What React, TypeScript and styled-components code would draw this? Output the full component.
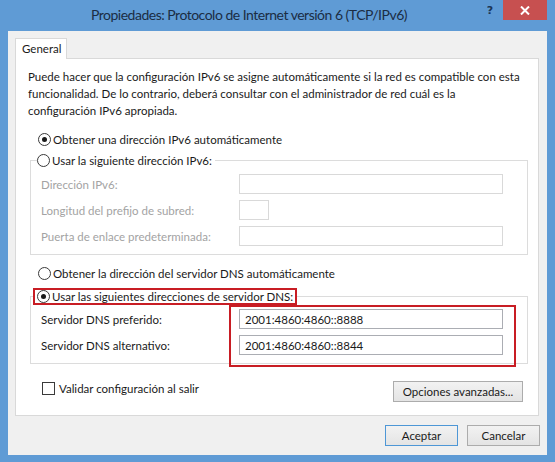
import styled, { createGlobalStyle } from "styled-components";

const GlobalStyle = createGlobalStyle`
  html, body {
    margin: 0;
    padding: 0;
  }
  body {
    background: #5f9bd5;
    font-family: "Lato", "Noto Sans", sans-serif;
    font-size: 11.5px;
    color: #1a1a1a;
  }
`;

const Window = styled.div`
  width: 555px;
  height: 462px;
  box-sizing: border-box;
  padding: 0 8px 7px 8px;
  display: flex;
  flex-direction: column;
  background: #5f9bd5;
`;

const TitleBar = styled.div`
  height: 31px;
  display: flex;
  flex-shrink: 0;
`;

const Title = styled.div`
  flex: 1;
  padding-left: 83px;
  line-height: 30px;
  font-size: 14px;
  letter-spacing: -0.5px;
  color: #1b2d44;
  white-space: nowrap;
  overflow: hidden;
`;

const HelpButton = styled.div`
  width: 26px;
  height: 20px;
  display: flex;
  align-items: center;
  justify-content: center;
  font-family: "DejaVu Sans", "Liberation Sans", sans-serif;
  font-weight: bold;
  font-size: 11px;
  color: #1b3556;
`;

const CloseButton = styled.div`
  width: 44px;
  height: 20px;
  background: #c75050;
  display: flex;
  align-items: center;
  justify-content: center;
`;

const Client = styled.div`
  flex: 1;
  background: #f0f0f0;
  padding: 7px 7px 0 7px;
  display: flex;
  flex-direction: column;
`;

const TabStrip = styled.div`
  display: flex;
  height: 20px;
`;

const Tab = styled.div`
  position: relative;
  z-index: 1;
  width: 52px;
  height: 21px;
  box-sizing: border-box;
  border: 1px solid #d9d9d9;
  border-bottom: none;
  background: #fff;
  padding-left: 6px;
  line-height: 19px;
`;

const Panel = styled.div`
  height: 358px;
  box-sizing: border-box;
  border: 1px solid #d9d9d9;
  background: #fff;
  margin-right: 1px;
  padding: 9px 12px 0 12px;
  display: flex;
  flex-direction: column;
`;

const Intro = styled.p`
  margin: 0;
  line-height: 17px;
  white-space: nowrap;
`;

const RadioRow = styled.label<{ $top: number }>`
  display: flex;
  align-items: center;
  gap: 2px;
  height: 17px;
  margin: ${({ $top }) => $top}px 0 0 10px;
  white-space: nowrap;
`;

const Radio = styled.span<{ $checked?: boolean }>`
  width: 13px;
  height: 13px;
  box-sizing: border-box;
  border-radius: 50%;
  border: 1px solid #3a3a3a;
  background: #fff;
  display: inline-flex;
  align-items: center;
  justify-content: center;
  flex-shrink: 0;

  &::after {
    content: "";
    width: 5px;
    height: 5px;
    border-radius: 50%;
    background: ${({ $checked }) => ($checked ? "#1a1a1a" : "transparent")};
  }
`;

const Group = styled.fieldset<{ $top: number }>`
  margin: ${({ $top }) => $top}px -2px 0 2px;
  padding: 0;
  min-width: 0;
  border: 1px solid #dcdcdc;
`;

const Legend = styled.legend<{ $indent: number }>`
  padding: 0;
  margin-left: ${({ $indent }) => $indent}px;
`;

const LegendRow = styled.span`
  display: flex;
  align-items: center;
  gap: 2px;
  height: 17px;
  padding-right: 3px;
  white-space: nowrap;
`;

const Highlight = styled.span`
  display: flex;
  align-items: center;
  gap: 2px;
  height: 17px;
  box-sizing: border-box;
  border: 2px solid #c81d24;
  padding: 0 2px;
  white-space: nowrap;
`;

const FieldGrid = styled.div`
  display: grid;
  grid-template-columns: 198px 264px;
  grid-auto-rows: 20px;
  row-gap: 6px;
  align-items: center;
  padding: 5px 0 8px 10px;
`;

const FieldLabel = styled.span<{ $disabled?: boolean }>`
  color: ${({ $disabled }) => ($disabled ? "#a3a3a3" : "#1a1a1a")};
  white-space: nowrap;
`;

const TextBox = styled.input<{ $width?: number }>`
  width: ${({ $width }) => $width ?? 264}px;
  height: 20px;
  box-sizing: border-box;
  margin: 0;
  padding: 0 0 0 5px;
  border: 1px solid #abadb3;
  background: #fff;
  font: inherit;
  color: #1a1a1a;
  outline: none;

  &:disabled {
    border-color: #d9d9d9;
    background: #fff;
  }
`;

const DnsBody = styled.div`
  display: flex;
  padding-left: 10px;
`;

const DnsLabels = styled.div`
  width: 188px;
  display: grid;
  grid-auto-rows: 20px;
  row-gap: 6px;
  align-items: center;
  align-content: start;
  padding-top: 4px;
`;

const DnsBox = styled.div`
  display: flex;
  flex-direction: column;
  gap: 6px;
  border: 2px solid #c81d24;
  padding: 2px 11px 10px 8px;
  margin-bottom: -4px;
`;

const BottomRow = styled.div`
  display: flex;
  justify-content: space-between;
  align-items: flex-start;
  margin-top: 17px;
`;

const CheckRow = styled.label`
  display: flex;
  align-items: center;
  gap: 4px;
  margin: 1px 0 0 14px;
  height: 13px;
`;

const CheckBox = styled.span`
  width: 13px;
  height: 13px;
  box-sizing: border-box;
  border: 1px solid #3a3a3a;
  background: #fff;
`;

const Button = styled.button<{ $width: number; $primary?: boolean }>`
  width: ${({ $width }) => $width}px;
  height: 21px;
  box-sizing: border-box;
  margin: 0;
  padding: 0;
  border: 1px solid ${({ $primary }) => ($primary ? "#4e97d6" : "#acacac")};
  background: linear-gradient(#f2f2f2, #e4e4e4);
  font: inherit;
  color: #1a1a1a;
`;

const AdvancedButton = styled(Button)`
  margin-right: 3px;
`;

const Footer = styled.div`
  display: flex;
  justify-content: flex-end;
  gap: 9px;
  padding-top: 9px;
`;

function CloseIcon() {
  return (
    <svg width="10" height="9" viewBox="0 0 10 9">
      <path d="M1 0.5 L9 8.5 M9 0.5 L1 8.5" stroke="#fff" strokeWidth="2" />
    </svg>
  );
}

export default function App() {
  return (
    <>
      <GlobalStyle />
      <Window>
        <TitleBar>
          <Title>Propiedades: Protocolo de Internet versión 6 (TCP/IPv6)</Title>
          <HelpButton>?</HelpButton>
          <CloseButton>
            <CloseIcon />
          </CloseButton>
        </TitleBar>
        <Client>
          <TabStrip>
            <Tab>General</Tab>
          </TabStrip>
          <Panel>
            <Intro>
              Puede hacer que la configuración IPv6 se asigne automáticamente si la red es compatible con esta
              <br />
              funcionalidad. De lo contrario, deberá consultar con el administrador de red cuál es la
              <br />
              configuración IPv6 apropiada.
            </Intro>

            <RadioRow $top={12}>
              <Radio $checked />
              Obtener una dirección IPv6 automáticamente
            </RadioRow>

            <Group $top={4}>
              <Legend $indent={6}>
                <LegendRow>
                  <Radio />
                  Usar la siguiente dirección IPv6:
                </LegendRow>
              </Legend>
              <FieldGrid>
                <FieldLabel $disabled>Dirección IPv6:</FieldLabel>
                <TextBox disabled />
                <FieldLabel $disabled>Longitud del prefijo de subred:</FieldLabel>
                <TextBox disabled $width={30} />
                <FieldLabel $disabled>Puerta de enlace predeterminada:</FieldLabel>
                <TextBox disabled />
              </FieldGrid>
            </Group>

            <RadioRow $top={10}>
              <Radio />
              Obtener la dirección del servidor DNS automáticamente
            </RadioRow>

            <Group $top={6}>
              <Legend $indent={2}>
                <Highlight>
                  <Radio $checked />
                  Usar las siguientes direcciones de servidor DNS:
                </Highlight>
              </Legend>
              <DnsBody>
                <DnsLabels>
                  <FieldLabel>Servidor DNS preferido:</FieldLabel>
                  <FieldLabel>Servidor DNS alternativo:</FieldLabel>
                </DnsLabels>
                <DnsBox>
                  <TextBox readOnly defaultValue="2001:4860:4860::8888" />
                  <TextBox readOnly defaultValue="2001:4860:4860::8844" />
                </DnsBox>
              </DnsBody>
            </Group>

            <BottomRow>
              <CheckRow>
                <CheckBox />
                Validar configuración al salir
              </CheckRow>
              <AdvancedButton $width={130}>Opciones avanzadas...</AdvancedButton>
            </BottomRow>
          </Panel>
          <Footer>
            <Button $width={73} $primary>
              Aceptar
            </Button>
            <Button $width={73}>Cancelar</Button>
          </Footer>
        </Client>
      </Window>
    </>
  );
}
